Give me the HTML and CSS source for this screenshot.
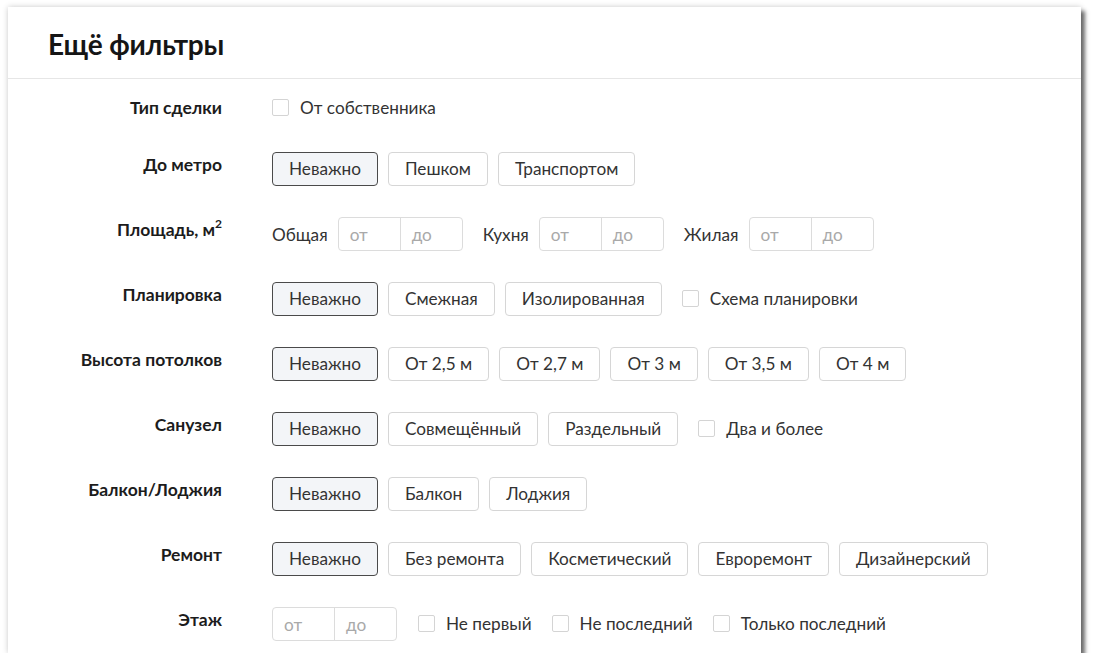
FILE: index.html
```html
<!DOCTYPE html>
<html lang="ru">
<head>
<meta charset="utf-8">
<title>Ещё фильтры</title>
<link rel="stylesheet" href="styles.css">
</head>
<body>
<div class="card">
  <div class="card-header"><h1 class="title">Ещё фильтры</h1></div>
  <div class="rows">
    <div class="row row-first">
      <div class="label">Тип сделки</div>
      <div class="controls">
        <label class="check"><span class="box"></span>От собственника</label>
      </div>
    </div>
    <div class="row">
      <div class="label">До метро</div>
      <div class="controls">
        <span class="btn active">Неважно</span>
        <span class="btn">Пешком</span>
        <span class="btn">Транспортом</span>
      </div>
    </div>
    <div class="row">
      <div class="label">Площадь, м<sup>2</sup></div>
      <div class="controls">
        <div class="range-group"><span class="range-label">Общая</span><div class="range"><span class="cell">от</span><span class="cell">до</span></div></div>
        <div class="range-group"><span class="range-label">Кухня</span><div class="range"><span class="cell">от</span><span class="cell">до</span></div></div>
        <div class="range-group"><span class="range-label">Жилая</span><div class="range"><span class="cell">от</span><span class="cell">до</span></div></div>
      </div>
    </div>
    <div class="row">
      <div class="label">Планировка</div>
      <div class="controls">
        <span class="btn active">Неважно</span>
        <span class="btn">Смежная</span>
        <span class="btn">Изолированная</span>
        <label class="check after-btn"><span class="box"></span>Схема планировки</label>
      </div>
    </div>
    <div class="row">
      <div class="label">Высота потолков</div>
      <div class="controls">
        <span class="btn active">Неважно</span>
        <span class="btn">От 2,5 м</span>
        <span class="btn">От 2,7 м</span>
        <span class="btn">От 3 м</span>
        <span class="btn">От 3,5 м</span>
        <span class="btn">От 4 м</span>
      </div>
    </div>
    <div class="row">
      <div class="label">Санузел</div>
      <div class="controls">
        <span class="btn active">Неважно</span>
        <span class="btn">Совмещённый</span>
        <span class="btn">Раздельный</span>
        <label class="check after-btn"><span class="box"></span>Два и более</label>
      </div>
    </div>
    <div class="row">
      <div class="label">Балкон/Лоджия</div>
      <div class="controls">
        <span class="btn active">Неважно</span>
        <span class="btn">Балкон</span>
        <span class="btn">Лоджия</span>
      </div>
    </div>
    <div class="row">
      <div class="label">Ремонт</div>
      <div class="controls">
        <span class="btn active">Неважно</span>
        <span class="btn">Без ремонта</span>
        <span class="btn">Косметический</span>
        <span class="btn">Евроремонт</span>
        <span class="btn">Дизайнерский</span>
      </div>
    </div>
    <div class="row">
      <div class="label">Этаж</div>
      <div class="controls floor">
        <div class="range"><span class="cell">от</span><span class="cell">до</span></div>
        <label class="check"><span class="box"></span>Не первый</label>
        <label class="check"><span class="box"></span>Не последний</label>
        <label class="check"><span class="box"></span>Только последний</label>
      </div>
    </div>
  </div>
</div>
</body>
</html>
```

FILE: styles.css
```css
html, body {
  margin: 0;
  padding: 0;
  background: #ffffff;
}
body {
  padding: 7px 0 0 8px;
  font-family: Lato, "Noto Sans", sans-serif;
  color: #1f1f1f;
}
.card {
  width: 1073px;
  height: 646px;
  box-sizing: border-box;
  background: #fff;
  box-shadow: 4px 4px 4px rgba(0, 0, 0, 0.55), 0 0 6px rgba(0, 0, 0, 0.2);
  overflow: hidden;
}
.card-header {
  height: 72px;
  box-sizing: border-box;
  border-bottom: 1px solid #e6e6e6;
  padding-left: 40px;
  display: flex;
  align-items: center;
}
.title {
  margin: 0;
  font-size: 28px;
  font-weight: 700;
  color: #151515;
  letter-spacing: -0.2px;
  position: relative;
  top: 1px;
}
.rows {
  padding-top: 14px;
}
.row {
  display: flex;
  align-items: flex-start;
  height: 34px;
  margin-bottom: 31px;
}
.row-first {
  height: 30px;
  margin-bottom: 29px;
}
.label {
  width: 214px;
  flex: none;
  text-align: right;
  font-size: 17.5px;
  font-weight: 700;
  color: #1c1c1c;
  line-height: 22px;
  padding-top: 2px;
}
.row-first .label {
  padding-top: 4px;
}
.label sup {
  font-size: 12px;
  line-height: 0;
  position: relative;
  top: -1px;
}
.controls {
  margin-left: 50px;
  display: flex;
  align-items: center;
  height: 34px;
  gap: 10px;
  font-size: 17.2px;
  color: #333;
}
.row-first .controls {
  height: 30px;
}
.btn {
  height: 34px;
  box-sizing: border-box;
  border: 1px solid #d6d6d6;
  border-radius: 4px;
  padding: 0 16px;
  display: inline-flex;
  align-items: center;
  line-height: 1;
  color: #333;
  background: #fff;
}
.btn.active {
  background: #f3f5f8;
  border-color: #4a4a4a;
}
.check {
  display: inline-flex;
  align-items: center;
  gap: 11px;
  color: #333;
  line-height: 1;
}
.check.after-btn {
  margin-left: 10px;
}
.box {
  width: 17px;
  height: 17px;
  box-sizing: border-box;
  border: 1px solid #d4d4d4;
  border-radius: 2px;
  background: #fff;
  flex: none;
}
.range-group {
  display: flex;
  align-items: center;
  gap: 10px;
  margin-right: 10px;
}
.range-label {
  color: #333;
}
.range {
  display: flex;
  width: 125px;
  height: 34px;
  box-sizing: border-box;
  border: 1px solid #dcdcdc;
  border-radius: 4px;
}
.cell {
  flex: 1;
  display: flex;
  align-items: center;
  padding-left: 11px;
  color: #a9a9a9;
}
.cell + .cell {
  border-left: 1px solid #dcdcdc;
}
.floor {
  gap: 20px;
}
.floor .range {
  margin-right: 1px;
}
```
